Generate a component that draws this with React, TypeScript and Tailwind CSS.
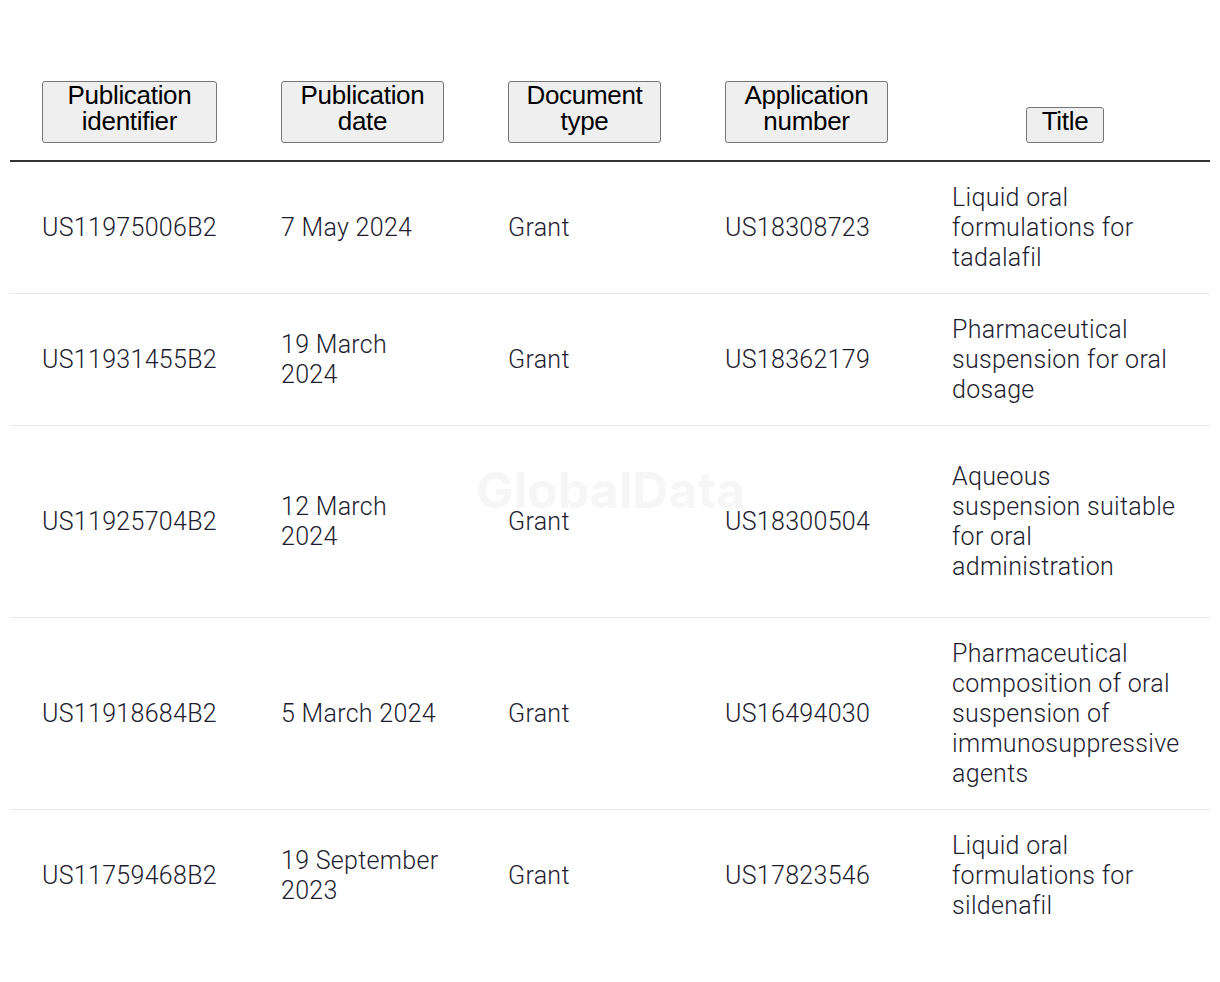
import React from 'react';

interface PatentRow {
  id: string;
  date: string;
  docType: string;
  appNumber: string;
  title: string;
  height: string;
}

const rows: PatentRow[] = [
  { id: 'US11975006B2', date: '7 May 2024', docType: 'Grant', appNumber: 'US18308723', title: 'Liquid oral formulations for tadalafil', height: 'h-[132px]' },
  { id: 'US11931455B2', date: '19 March 2024', docType: 'Grant', appNumber: 'US18362179', title: 'Pharmaceutical suspension for oral dosage', height: 'h-[132px]' },
  { id: 'US11925704B2', date: '12 March 2024', docType: 'Grant', appNumber: 'US18300504', title: 'Aqueous suspension suitable for oral administration', height: 'h-[192px]' },
  { id: 'US11918684B2', date: '5 March 2024', docType: 'Grant', appNumber: 'US16494030', title: 'Pharmaceutical composition of oral suspension of immunosuppressive agents', height: 'h-[192px]' },
  { id: 'US11759468B2', date: '19 September 2023', docType: 'Grant', appNumber: 'US17823546', title: 'Liquid oral formulations for sildenafil', height: 'h-[132px]' },
];

const headers = ['Publication identifier', 'Publication date', 'Document type', 'Application number', 'Title'];

const gridCols = 'grid grid-cols-[239px_227px_217px_227px_290px]';

export default function App() {
  return (
    <div className="min-h-screen bg-white px-[10px] pt-[81px] font-['Roboto',sans-serif]">
      <div className="relative w-[1200px]">
        {/* Header */}
        <div className={`${gridCols} items-end border-b-2 border-[#333333] pb-[17px]`}>
          {headers.map((h) => (
            <div key={h} className="px-[32px] text-center">
              <button className="rounded-[3px] border border-[#767676] bg-[#efefef] px-[15px] pt-0 pb-[8px] font-['Liberation_Sans',Arial,sans-serif] text-[26px] leading-[26px] tracking-[-0.3px] text-black">
                {h}
              </button>
            </div>
          ))}
        </div>

        {/* Body */}
        {rows.map((r, i) => (
          <div
            key={r.id}
            className={`${gridCols} ${r.height} items-center text-[25px] font-light leading-[30px] tracking-[0.3px] text-[#1d1d2f] ${i < rows.length - 1 ? 'border-b border-[#ebebeb]' : ''}`}
          >
            <div className="px-[32px]">{r.id}</div>
            <div className="px-[32px]">{r.date}</div>
            <div className="px-[32px]">{r.docType}</div>
            <div className="px-[32px]">{r.appNumber}</div>
            <div className="pl-[32px] pr-[26px]">{r.title}</div>
          </div>
        ))}

        {/* Watermark */}
        <div className="pointer-events-none absolute left-[466px] top-[384px] select-none font-['Inter',sans-serif] text-[50px] font-bold leading-none text-[#f6f6f6]">
          GlobalData
        </div>
      </div>
    </div>
  );
}
